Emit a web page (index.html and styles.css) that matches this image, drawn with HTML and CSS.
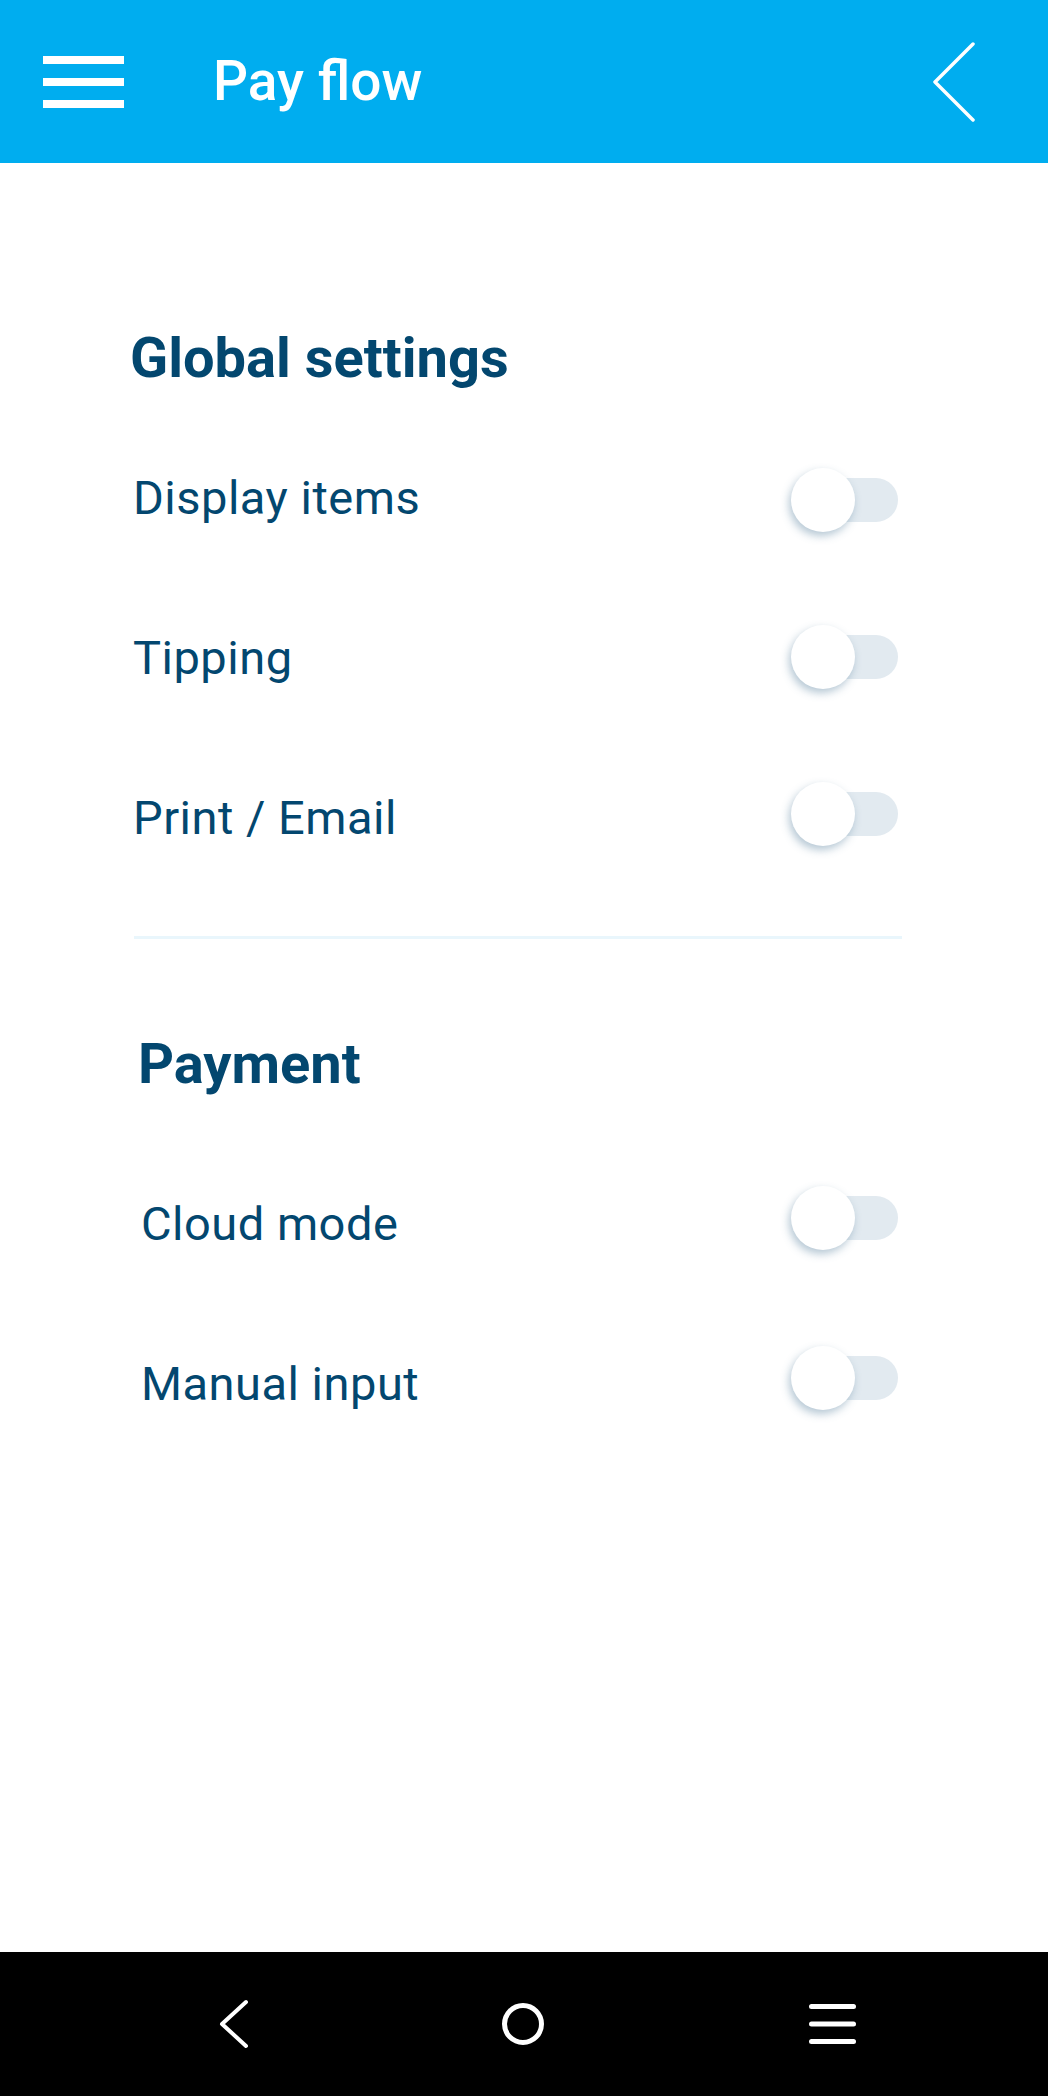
FILE: index.html
```html
<!DOCTYPE html>
<html>
<head>
<meta charset="utf-8">
<link rel="stylesheet" href="styles.css">
</head>
<body>
<div class="app">
  <header class="topbar">
    <svg class="menu-icon" width="81" height="52" viewBox="0 0 81 52">
      <rect x="0" y="0" width="81" height="8" fill="#fff"/>
      <rect x="0" y="22" width="81" height="8" fill="#fff"/>
      <rect x="0" y="44" width="81" height="8" fill="#fff"/>
    </svg>
    <h1 class="title">Pay flow</h1>
    <svg class="back-icon" width="44" height="80" viewBox="0 0 44 80">
      <polyline points="41,2 3,40 41,78" fill="none" stroke="#fff" stroke-width="3.5" stroke-linecap="round" stroke-linejoin="round"/>
    </svg>
  </header>

  <main class="content">
    <section class="section section-global">
      <h2 class="section-title">Global settings</h2>
      <div class="row"><span class="label">Display items</span><div class="toggle toggle-down"><span class="track"></span><span class="knob"></span></div></div>
      <div class="row"><span class="label">Tipping</span><div class="toggle"><span class="track"></span><span class="knob"></span></div></div>
      <div class="row"><span class="label">Print / Email</span><div class="toggle toggle-up"><span class="track"></span><span class="knob"></span></div></div>
    </section>
    <div class="divider"></div>
    <section class="section section-payment">
      <h2 class="section-title">Payment</h2>
      <div class="row"><span class="label">Cloud mode</span><div class="toggle toggle-high"><span class="track"></span><span class="knob"></span></div></div>
      <div class="row"><span class="label">Manual input</span><div class="toggle toggle-high"><span class="track"></span><span class="knob"></span></div></div>
    </section>
  </main>

  <nav class="sysnav">
    <svg class="nav-back" width="32" height="52" viewBox="0 0 32 52">
      <polyline points="28,4 4,26 28,48" fill="none" stroke="#fff" stroke-width="4" stroke-linecap="round" stroke-linejoin="round"/>
    </svg>
    <svg class="nav-home" width="48" height="48" viewBox="0 0 48 48">
      <circle cx="24" cy="24" r="18.5" fill="none" stroke="#fff" stroke-width="5"/>
    </svg>
    <svg class="nav-recent" width="47" height="40" viewBox="0 0 47 40">
      <line x1="2.5" y1="2.5" x2="44.5" y2="2.5" stroke="#fff" stroke-width="5" stroke-linecap="round"/>
      <line x1="2.5" y1="20" x2="44.5" y2="20" stroke="#fff" stroke-width="5" stroke-linecap="round"/>
      <line x1="2.5" y1="37.5" x2="44.5" y2="37.5" stroke="#fff" stroke-width="5" stroke-linecap="round"/>
    </svg>
  </nav>
</div>
</body>
</html>
```
FILE: styles.css
```css
* { box-sizing: border-box; }
html, body { margin: 0; padding: 0; }
body {
  width: 1048px;
  height: 2096px;
  background: #fff;
  font-family: Roboto, "Noto Sans", sans-serif;
  color: #03476f;
}
.app {
  display: flex;
  flex-direction: column;
  height: 2096px;
}
.topbar {
  height: 163px;
  flex: none;
  background: #00adef;
  display: flex;
  align-items: center;
  padding-left: 43px;
  padding-right: 72px;
}
.menu-icon { display: block; flex: none; }
.title {
  margin: 0 0 2px 89px;
  font-size: 55px;
  font-weight: 500;
  color: #fff;
  line-height: 64px;
  flex: 1;
}
.back-icon { display: block; flex: none; }

.content {
  flex: 1;
  padding-top: 162px;
}
.section { padding-right: 150px; }
.section-global { padding-left: 130px; }
.section-payment { padding-left: 137px; margin-top: 92px; }
.section-title {
  margin: 0;
  font-size: 56px;
  font-weight: 700;
  line-height: 66px;
  color: #03476f;
}
.section-global .section-title { margin-bottom: 26px; }
.section-payment .section-title { margin-bottom: 46px; margin-left: 1px; }
.row {
  display: flex;
  align-items: center;
  justify-content: space-between;
  height: 160px;
}
.label {
  font-size: 47px;
  font-weight: 400;
  line-height: 55px;
  letter-spacing: 0.5px;
  margin-left: 3px;
}
.section-payment .label { margin-left: 4px; }
.toggle {
  position: relative;
  width: 107px;
  height: 64px;
  flex: none;
}
.toggle-down { transform: translateY(3px); }
.toggle-up { transform: translateY(-3px); }
.toggle-high { transform: translateY(-5px); }
.track {
  position: absolute;
  left: 11px;
  top: 10px;
  width: 96px;
  height: 44px;
  border-radius: 22px;
  background: #e2eaf0;
}
.knob {
  position: absolute;
  left: 0;
  top: 0;
  width: 64px;
  height: 64px;
  border-radius: 50%;
  background: #fff;
  box-shadow: -2px 4px 8px rgba(90, 130, 160, 0.45);
}
.divider {
  margin: 39px 146px 0 134px;
  height: 3px;
  background: #e9f6fc;
}

.sysnav {
  height: 144px;
  flex: none;
  background: #000;
  display: flex;
  align-items: center;
  padding-left: 218px;
}
.sysnav svg { display: block; flex: none; }
.nav-home { margin-left: 249px; }
.nav-recent { margin-left: 262px; }
```
